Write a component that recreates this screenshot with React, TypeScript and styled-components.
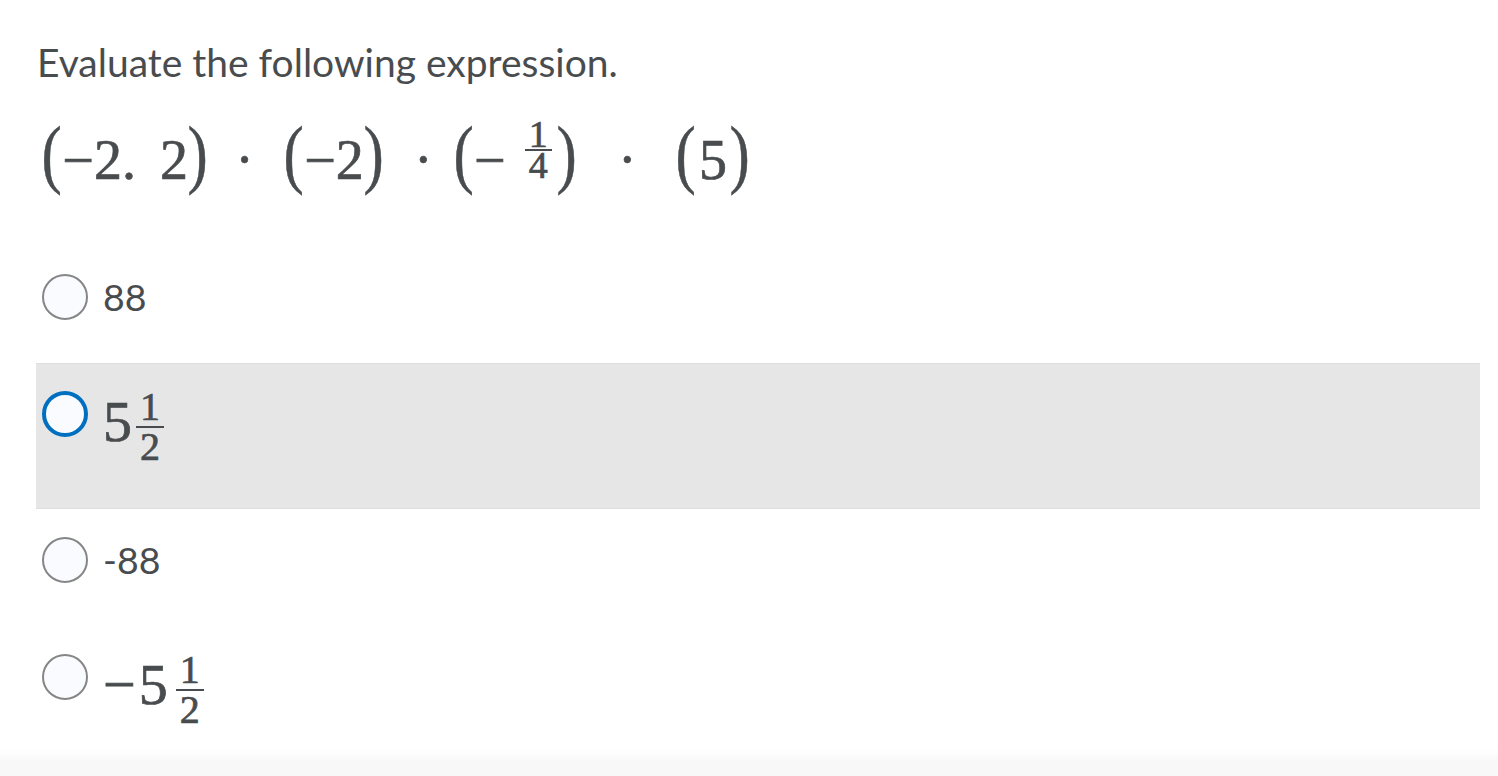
import React from "react";
import styled, { createGlobalStyle, css } from "styled-components";

const GlobalStyle = createGlobalStyle`
  html, body {
    margin: 0;
    padding: 0;
    background: #ffffff;
  }
  body {
    font-family: Lato, "Open Sans", sans-serif;
    color: #494c4e;
  }
`;

const mathFont = css`
  font-family: "Liberation Serif", "Times New Roman", serif;
  font-style: normal;
  color: #494c4e;
  -webkit-text-stroke: 0.7px #494c4e;
`;

const Page = styled.div`
  display: flex;
  flex-direction: column;
  min-height: 776px;
  box-sizing: border-box;
`;

const Content = styled.main`
  flex: 1;
  padding: 37px 18px 0 36px;
`;

const Prompt = styled.h1`
  margin: 0;
  font-family: Lato, sans-serif;
  font-weight: 400;
  font-size: 39px;
  line-height: 50px;
  color: #494c4e;
  padding-left: 1px;
`;

const Expression = styled.div`
  ${mathFont};
  margin-top: 28px;
  padding-left: 3px;
  font-size: 56px;
  line-height: 80px;
  white-space: nowrap;
`;

const Paren = styled.span<{ $close?: boolean }>`
  ${mathFont};
  font-size: 76px;
  line-height: 1;
  display: inline-block;
  transform: scaleX(0.8);
  margin: ${(p) => (p.$close ? "0 0 0 -3px" : "0 -2px 0 0")};
  -webkit-text-stroke: 0.5px #494c4e;
`;

const Num = styled.span<{ $pad?: number }>`
  ${mathFont};
  display: inline-block;
  padding: 0 ${(p) => p.$pad ?? 0}px;
`;

const NumSpace = styled.span`
  display: inline-block;
  width: 24px;
`;

const Minus = styled.span<{ $after?: number }>`
  ${mathFont};
  display: inline-block;
  margin-right: ${(p) => p.$after ?? 0}px;
`;

const Dot = styled.span<{ $before: number; $after: number }>`
  ${mathFont};
  display: inline-block;
  margin-left: ${(p) => p.$before}px;
  margin-right: ${(p) => p.$after}px;
`;

const Frac = styled.span<{
  $size: number;
  $raise: number;
  $left: number;
  $right: number;
}>`
  ${mathFont};
  display: inline-flex;
  flex-direction: column;
  align-items: center;
  vertical-align: ${(p) => p.$raise}px;
  font-size: ${(p) => p.$size}px;
  line-height: 0.8;
  margin: 0 ${(p) => p.$right}px 0 ${(p) => p.$left}px;
`;

const FracPart = styled.span`
  ${mathFont};
  display: block;
  padding: 0 4px;
`;

const FracBar = styled.span<{ $above: number; $below: number }>`
  display: block;
  align-self: stretch;
  height: 2px;
  background: #494c4e;
  margin: ${(p) => p.$above}px 0 ${(p) => p.$below}px;
`;

const Options = styled.div`
  display: flex;
  flex-direction: column;
  margin-top: 46px;
`;

const OptionRow = styled.label<{ $selected?: boolean }>`
  display: flex;
  align-items: flex-start;
  gap: 15px;
  padding: 28px 6px 43px;
  background: ${(p) => (p.$selected ? "#e6e6e6" : "transparent")};
  box-shadow: ${(p) =>
    p.$selected ? "inset 0 1px 0 #dedede, inset 0 -1px 0 #dedede" : "none"};
`;

const Radio = styled.span<{ $selected?: boolean }>`
  flex: none;
  width: 46px;
  height: 46px;
  border-radius: 50%;
  box-sizing: border-box;
  background: #f9fbff;
  border: ${(p) => (p.$selected ? "4px solid #006fbf" : "2px solid #868686")};
`;

const OptionText = styled.span`
  font-family: Lato, sans-serif;
  font-size: 37.5px;
  line-height: 46px;
  color: #494c4e;
`;

const MathText = styled.span`
  ${mathFont};
  display: block;
  font-size: 58px;
  line-height: 1;
  padding-bottom: 3px;
  white-space: nowrap;
`;

const Footer = styled.footer`
  position: fixed;
  left: 0;
  right: 0;
  bottom: 0;
  height: 26px;
  background: linear-gradient(rgba(248, 248, 248, 0), #f8f8f8 45%, #f8f8f8);
  pointer-events: none;
`;

function Fraction({
  num,
  den,
  size,
  raise,
  left,
  right,
  above,
  below,
}: {
  num: string;
  den: string;
  size: number;
  raise: number;
  left: number;
  right: number;
  above: number;
  below: number;
}) {
  return (
    <Frac $size={size} $raise={raise} $left={left} $right={right}>
      <FracPart>{num}</FracPart>
      <FracBar $above={above} $below={below} />
      <FracPart>{den}</FracPart>
    </Frac>
  );
}

export default function App() {
  return (
    <>
      <GlobalStyle />
      <Page>
        <Content>
          <Prompt>Evaluate the following expression.</Prompt>
          <Expression>
            <Paren>(</Paren>
            <Minus>−</Minus>
            <Num>2.</Num>
            <NumSpace />
            <Num>2</Num>
            <Paren $close>)</Paren>
            <Dot $before={25} $after={27}>·</Dot>
            <Paren>(</Paren>
            <Minus>−</Minus>
            <Num>2</Num>
            <Paren $close>)</Paren>
            <Dot $before={28} $after={18}>·</Dot>
            <Paren>(</Paren>
            <Minus>−</Minus>
            <Fraction num="1" den="4" size={38} raise={32} left={19} right={5} above={0} below={-1} />
            <Paren $close>)</Paren>
            <Dot $before={39} $after={36}>·</Dot>
            <Paren>(</Paren>
            <Num $pad={3}>5</Num>
            <Paren $close>)</Paren>
          </Expression>
          <Options>
            <OptionRow>
              <Radio />
              <OptionText>88</OptionText>
            </OptionRow>
            <OptionRow $selected>
              <Radio $selected />
              <MathText>
                <Num>5</Num>
                <Fraction num="1" den="2" size={40} raise={21} left={4} right={4} above={3} below={3} />
              </MathText>
            </OptionRow>
            <OptionRow>
              <Radio />
              <OptionText>-88</OptionText>
            </OptionRow>
            <OptionRow>
              <Radio />
              <MathText>
                <Minus $after={3}>−</Minus>
                <Num>5</Num>
                <Fraction num="1" den="2" size={40} raise={21} left={8} right={4} above={3} below={3} />
              </MathText>
            </OptionRow>
          </Options>
        </Content>
        <Footer />
      </Page>
    </>
  );
}
